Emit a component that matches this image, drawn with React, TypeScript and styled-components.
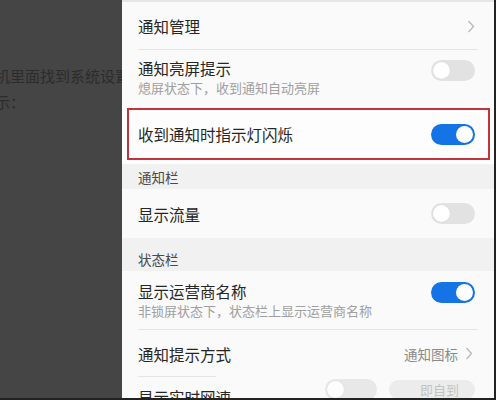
import styled, { createGlobalStyle } from 'styled-components';

const GlobalStyle = createGlobalStyle`
	html, body {
		margin: 0;
		padding: 0;
		background: #222;
	}
	body {
		font-family: 'Noto Sans CJK SC', 'Noto Sans', sans-serif;
	}
`;

const Screen = styled.div`
	display: flex;
	width: 496px;
	height: 400px;
	overflow: hidden;
	background: #222;
`;

const Backdrop = styled.div`
	width: 122px;
	height: 398px;
	flex-shrink: 0;
	background: #454545;
	overflow: hidden;
	padding-top: 63px;
	box-sizing: border-box;
`;

const BackdropLine = styled.div`
	white-space: nowrap;
	font-size: 15px;
	line-height: 26px;
	color: #2c2c2c;
	margin-left: -5px;
`;

const Panel = styled.div`
	width: 372px;
	height: 398px;
	flex-shrink: 0;
	background: #fafafa;
	overflow: hidden;
	display: flex;
	flex-direction: column;
	border-top: 2px solid #e6e6e6;
	box-sizing: border-box;
`;

const Row = styled.div<{ $h: number; $line?: boolean; $short?: boolean }>`
	flex-shrink: 0;
	height: ${(p) => p.$h}px;
	display: flex;
	align-items: center;
	justify-content: space-between;
	padding: 0 19px 0 16px;
	box-sizing: border-box;
	position: relative;
	${(p) =>
		p.$line &&
		`&::after {
			content: '';
			position: absolute;
			left: 16px;
			right: ${p.$short ? 278 : 16}px;
			bottom: 0;
			height: 1px;
			background: #e4e4e4;
		}`}
`;

const Texts = styled.div`
	display: flex;
	flex-direction: column;
`;

const Title = styled.span`
	font-size: 15.5px;
	line-height: 20px;
	color: #262626;
`;

const ClippedTitle = styled(Title)`
	align-self: flex-start;
	margin-top: 10px;
`;

const Sub = styled.span`
	font-size: 13px;
	line-height: 18px;
	margin-top: 1px;
	color: #a0a0a0;
`;

const Highlight = styled.div`
	flex-shrink: 0;
	height: 59px;
	padding: 3px 4px 8px 5px;
	box-sizing: border-box;
	background: #fdfdfd;
`;

const RedBox = styled.div`
	height: 100%;
	border: 2px solid #c2343c;
	display: flex;
	align-items: center;
	justify-content: space-between;
	padding: 0 13px 0 9px;
`;

const Section = styled.div<{ $h: number; $pt: number }>`
	flex-shrink: 0;
	height: ${(p) => p.$h}px;
	padding: ${(p) => p.$pt}px 16px 0;
	box-sizing: border-box;
	background: #f1f1f1;
	font-size: 13.5px;
	line-height: 20px;
	color: #4a4a4a;
`;

const Toggle = styled.div<{ $on?: boolean; $w?: number; $lift?: number }>`
	width: ${(p) => p.$w ?? 44}px;
	height: 21px;
	border-radius: 11px;
	background: ${(p) => (p.$on ? '#1474e6' : '#e2e2e2')};
	display: flex;
	align-items: center;
	justify-content: ${(p) => (p.$on ? 'flex-end' : 'flex-start')};
	padding: 0 2px;
	margin-top: ${(p) => -(p.$lift ?? 0)}px;
	box-sizing: border-box;
	flex-shrink: 0;
	&::before {
		content: '';
		width: 17px;
		height: 17px;
		border-radius: 50%;
		background: #fff;
		box-shadow: 0 0 1px rgba(0, 0, 0, 0.15);
	}
`;

const Value = styled.div`
	display: flex;
	align-items: center;
	gap: 7px;
	font-size: 13.5px;
	color: #8a8a8a;
	margin-right: 2px;
`;

const Ghost = styled.div`
	display: flex;
	align-items: center;
	gap: 12px;
	align-self: flex-start;
	margin-top: 2px;
	opacity: 0.75;
`;

const GhostPill = styled.div`
	width: 86px;
	height: 19px;
	border-radius: 10px;
	background: #e8e8e8;
	font-size: 13px;
	line-height: 19px;
	color: #b0b0b0;
	text-align: right;
	padding-right: 16px;
	box-sizing: border-box;
`;

const Chevron = () => (
	<svg width="8" height="13" viewBox="0 0 8 13">
		<polyline points="1.5,1 6.5,6.5 1.5,12" fill="none" stroke="#b8b8b8" strokeWidth="1.3" />
	</svg>
);

export default function App() {
	return (
		<>
			<GlobalStyle />
			<Screen>
				<Backdrop>
					<BackdropLine>机里面找到系统设置</BackdropLine>
					<BackdropLine>示：</BackdropLine>
				</Backdrop>
				<Panel>
					<Row $h={48} $line>
						<Title>通知管理</Title>
						<Chevron />
					</Row>
					<Row $h={55}>
						<Texts>
							<Title>通知亮屏提示</Title>
							<Sub>熄屏状态下，收到通知自动亮屏</Sub>
						</Texts>
						<Toggle $lift={14} />
					</Row>
					<Highlight>
						<RedBox>
							<Title>收到通知时指示灯闪烁</Title>
							<Toggle $on />
						</RedBox>
					</Highlight>
					<Section $h={25} $pt={3}>通知栏</Section>
					<Row $h={49}>
						<Title>显示流量</Title>
						<Toggle />
					</Row>
					<Section $h={33} $pt={11}>状态栏</Section>
					<Row $h={59} $line>
						<Texts>
							<Title>显示运营商名称</Title>
							<Sub>非锁屏状态下，状态栏上显示运营商名称</Sub>
						</Texts>
						<Toggle $on $lift={16} />
					</Row>
					<Row $h={47} $line $short>
						<Title>通知提示方式</Title>
						<Value>
							通知图标
							<Chevron />
						</Value>
					</Row>
					<Row $h={40}>
						<ClippedTitle>显示实时网速</ClippedTitle>
						<Ghost>
							<Toggle $w={52} />
							<GhostPill>即自到</GhostPill>
						</Ghost>
					</Row>
				</Panel>
			</Screen>
		</>
	);
}
